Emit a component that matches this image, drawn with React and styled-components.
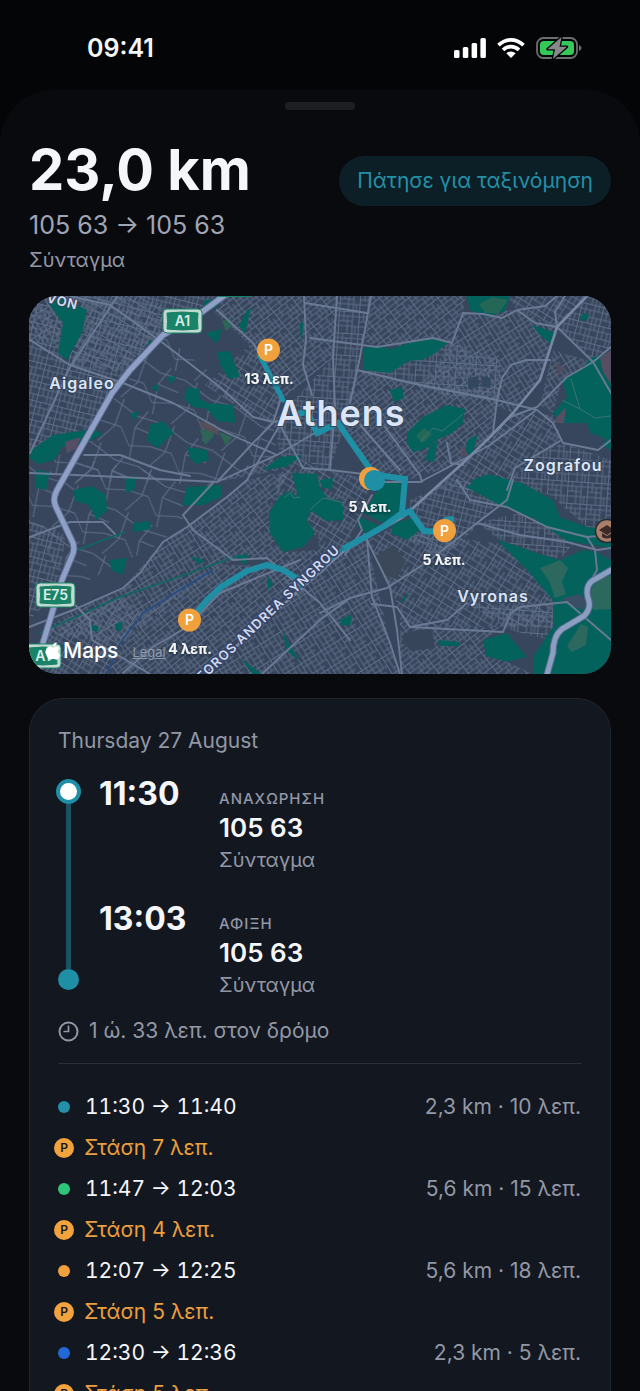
import React from "react";
import styled, { createGlobalStyle } from "styled-components";
import { FaApple } from "react-icons/fa";

const GlobalStyle = createGlobalStyle`
  * { box-sizing: border-box; }
  body { margin: 0; background: #040506; }
`;

const ui = `Inter, "Noto Sans", "Liberation Sans", sans-serif`;

const Screen = styled.div`
  display: flex;
  flex-direction: column;
  height: 100vh;
  overflow: hidden;
  background: #040506;
  color: #f5f6fa;
  font-family: ${ui};
`;

const StatusBar = styled.header`
  display: flex;
  flex: none;
  align-items: center;
  justify-content: space-between;
  height: 90px;
  padding: 5px 58px 0 87px;
`;

const Clock = styled.time`
  font-size: 25px;
  font-weight: 600;
  line-height: 32px;
`;

const StatusIcons = styled.div`
  display: flex;
  align-items: center;
  gap: 11px;
  svg { display: block; }
`;

const Sheet = styled.main`
  flex: 1;
  min-height: 0;
  overflow-y: auto;
  scrollbar-width: none;
  padding: 12px 29px 40px;
  border-radius: 54px 54px 0 0;
  background: #090a0e;
`;

const Handle = styled.div`
  width: 70px;
  height: 8px;
  margin: 0 auto;
  border-radius: 4px;
  background: #1d1e22;
`;

const SheetHeader = styled.div`
  display: flex;
  align-items: flex-start;
  justify-content: space-between;
  padding: 30px 0 23px;
`;

const Distance = styled.h1`
  margin: 0;
  font-size: 56px;
  font-weight: 700;
  line-height: 60px;
`;

const RouteCodes = styled.p`
  margin: 8px 0 0;
  color: #a0a5b5;
  font-size: 25px;
  line-height: 34px;
`;

const Area = styled.p`
  margin: 5px 0 0;
  color: #9397a6;
  font-size: 20px;
  line-height: 26px;
`;

const SortButton = styled.button`
  height: 50px;
  margin-top: 16px;
  padding: 0 18px;
  border: 0;
  border-radius: 25px;
  background: #0c1e26;
  color: #2490a8;
  font: 400 21px/28px ${ui};
  white-space: nowrap;
`;

const MapFrame = styled.section`
  position: relative;
  overflow: hidden;
  border-radius: 28px;
  background: #37465d;
`;

const MapArt = styled.svg`
  display: block;
  width: 100%;
  height: auto;
  font-family: ${ui};
`;

const Attribution = styled.div`
  position: absolute;
  left: 14px;
  bottom: 8px;
  display: flex;
  align-items: center;
  color: #fff;
`;

const MapBrand = styled.span`
  display: flex;
  align-items: center;
  font-size: 21px;
  font-weight: 500;
  line-height: 30px;
`;

const LegalLink = styled.a`
  margin-left: 14px;
  padding-top: 2px;
  color: #8d98ab;
  font-size: 13px;
  line-height: 18px;
`;

const Card = styled.section`
  margin-top: 24px;
  padding: 29px 28px 28px;
  border: 1px solid #20252e;
  border-radius: 34px;
  background: #131720;
`;

const CardDate = styled.h2`
  margin: 0 0 21px;
  color: #9297a5;
  font-size: 21px;
  font-weight: 400;
  line-height: 26px;
`;

const Timeline = styled.div`
  display: grid;
  grid-template-columns: 20px 1fr;
  column-gap: 21px;
`;

const Rail = styled.div`
  display: flex;
  flex-direction: column;
  align-items: center;
  padding: 4px 0 10px;
`;

const RailStart = styled.span`
  flex: none;
  width: 25px;
  height: 25px;
  border: 4px solid #1f8fa6;
  border-radius: 50%;
  background: #fff;
`;

const RailLine = styled.span`
  flex: 1;
  width: 5px;
  background: #1b5364;
`;

const RailEnd = styled.span`
  flex: none;
  width: 21px;
  height: 21px;
  border-radius: 50%;
  background: #1f8fa6;
`;

const Stops = styled.div`
  display: grid;
  row-gap: 25px;
`;

const Stop = styled.div`
  display: grid;
  grid-template-columns: 120px 1fr;
`;

const StopTime = styled.time`
  font-size: 32px;
  font-weight: 700;
  line-height: 38px;
`;

const StopDetails = styled.div`
  padding-top: 14px;
`;

const StopLabel = styled.div`
  color: #9297a5;
  font-size: 15px;
  font-weight: 500;
  line-height: 20px;
  letter-spacing: 1px;
`;

const StopCode = styled.div`
  margin-top: 2px;
  font-size: 26px;
  font-weight: 600;
  line-height: 34px;
`;

const StopArea = styled.div`
  color: #9297a5;
  font-size: 20px;
  line-height: 30px;
`;

const Duration = styled.div`
  display: flex;
  align-items: center;
  gap: 10px;
  margin-top: 17px;
  padding-bottom: 18px;
  border-bottom: 1px solid #2a2f38;
  color: #9297a5;
  font-size: 21px;
  line-height: 28px;
`;

const Legs = styled.ul`
  margin: 22px 0 0;
  padding: 0;
  list-style: none;
`;

const Row = styled.li`
  display: flex;
  align-items: center;
  height: 41px;
  color: ${(p) => (p.$pause ? "#eb9f3e" : "#f5f6fa")};
  font-size: 21px;
  line-height: 28px;
`;

const Marker = styled.span`
  display: flex;
  flex: none;
  justify-content: center;
  width: 12px;
  margin-right: ${(p) => (p.$pause ? "14px" : "15px")};
`;

const Dot = styled.span`
  width: 12px;
  height: 12px;
  border-radius: 50%;
  background: ${(p) => p.$color};
`;

const ParkingBadge = styled.span`
  flex: none;
  width: 20px;
  height: 20px;
  border-radius: 50%;
  background: #f2a33e;
  color: #131720;
  font-size: 12px;
  font-weight: 600;
  line-height: 20px;
  text-align: center;
`;

const LegTime = styled.span`
  font-variant-numeric: tabular-nums;
`;

const LegMeta = styled.span`
  margin-left: auto;
  padding-right: 1px;
  color: #9297a5;
`;

/* Street grids: each district repeats one tile at its own angle. */
const grids = [
  { id: "g0", angle: 14, w: 22, h: 19, d: "M0 .5H22M0 6H22M0 13H22M.5 0V19M5 0V13M10 6V19M14 0V19M18 0V6M18 13V19" },
  { id: "g1", angle: -38, w: 23, h: 18, d: "M0 .5H23M0 5H15M0 9H23M0 14H23M.5 0V18M6 0V9M11 9V18M15 0V14M19 5V18" },
  { id: "g2", angle: 32, w: 21, h: 23, d: "M0 .5H21M0 6H21M0 11H12M0 17H21M.5 0V23M4 6V17M8 0V11M12 0V23M17 11V23" },
  { id: "g3", angle: 4, w: 20, h: 22, d: "M0 .5H20M0 5H20M0 10H14M0 15H20M.5 0V22M5 0V10M9 5V22M14 0V22M17 15V22" },
  { id: "g4", angle: 58, w: 19, h: 24, d: "M0 .5H19M0 5H10M0 9H19M0 15H19M0 20H19M.5 0V24M5 9V24M10 0V15M15 5V20" },
  { id: "sparse", angle: 28, w: 57, h: 49, d: "M0 4L32 9L57 4M0 30L22 26L38 39L57 30M12 0L16 28L8 49M39 0L35 20L44 49M35 20L57 18" },
];

const districts = [
  ["g0", "29,296 216,296 163,335 112,393 87,430 29,450"],
  ["g4", "29,296 80,296 70,350 29,340"],
  ["g2", "70,296 145,296 180,315 120,372 72,365"],
  ["g1", "225,296 338,296 334,357 282,400 250,345 215,312"],
  ["g2", "205,385 250,345 282,400 273,422 250,416"],
  ["g3", "337,296 371,296 352,403 330,470 280,452 273,422 334,357"],
  ["g1", "371,296 466,296 463,313 452,343 377,347 363,340"],
  ["g4", "452,343 463,313 517,310 557,327 540,380 513,413 480,398 420,385"],
  ["g2", "508,296 587,296 557,327 517,310"],
  ["g0", "587,296 611,296 611,347 593,362 557,327"],
  ["g3", "360,373 452,343 500,360 500,400 447,396 415,385"],
  ["g1", "357,370 497,400 493,433 463,463 407,480 372,470 340,425"],
  ["g2", "463,463 513,413 553,415 563,443 533,457 505,490 433,490"],
  ["g4", "540,405 553,350 593,362 562,380 553,413"],
  ["g3", "533,457 563,443 611,460 611,530 587,527 550,495 507,485"],
  ["g2", "217,482 280,452 330,470 372,480 360,515 345,550 320,560 318,535 270,533 280,470"],
  ["g1", "187,527 247,480 290,470 270,510 285,552 320,550 300,600 267,560 233,560"],
  ["g4", "163,542 187,527 233,560 213,572 120,643 40,633 73,610 123,588"],
  ["g0", "29,520 65,535 60,590 29,620"],
  ["g2", "40,633 120,597 143,613 107,674 40,674"],
  ["g1", "107,674 143,613 220,565 267,565 300,580 208,674"],
  ["g4", "208,674 345,545 367,540 390,643 400,674"],
  ["g2", "367,540 410,520 430,535 510,545 553,600 553,627 503,627 410,627 390,590"],
  ["g1", "400,607 410,627 503,627 483,640 507,662 533,674 400,674"],
  ["g3", "467,603 520,607 560,605 550,640 510,630"],
  ["g0", "410,500 457,480 510,490 470,533 440,560 410,540"],
  ["g3", "477,523 520,513 580,535 560,560 500,540"],
  ["sparse", "90,430 163,335 273,422 277,455 217,482 60,482"],
  ["sparse", "29,450 217,482 213,483 163,542 70,590 29,520"],
];

const parks = [
  "48,303 62,298 87,310 82,333 67,360 58,353 63,323",
  "217,352 230,351 240,377 229,379 220,365",
  "187,387 200,389 199,397 207,403 233,405 236,423 217,421 207,409 193,407 184,399",
  "150,425 163,421 174,433 165,441 158,448 147,441",
  "29,452 53,435 93,429 103,434 86,443 62,447 54,460 39,464 29,458",
  "247,310 251,308 245,334 239,326",
  "187,447 207,450 209,460 196,464 190,458",
  "364,348 378,346 392,349 408,343 410,360 390,373 363,370",
  "408,343 433,338 449,342 434,354 422,360 408,361",
  "407,433 423,417 447,405 465,409 463,423 452,433 437,440 425,449 413,452 407,443",
  "467,296 510,296 505,311 487,317 470,310",
  "532,325 554,332 552,345 540,335",
  "562,380 583,367 590,358 611,353 611,450 593,440 587,423 560,423 553,413 567,397",
  "390,390 402,387 404,398 394,402",
  "292,473 317,474 320,488 327,497 310,512 307,520 315,533 303,547 283,552 270,533 269,513 280,496 289,491 298,497",
  "310,510 323,498 338,500 343,506 343,520 326,521",
  "263,470 280,457 303,455 286,467",
  "380,483 407,483 402,513 383,523 363,513 372,500",
  "360,517 371,522 382,527 367,534 358,527",
  "393,523 413,518 420,530 407,540 391,533",
  "466,487 477,480 520,482 553,500 560,517 587,527 611,530 611,548 567,541 535,519 500,505",
  "470,481 488,474 514,481 508,490",
  "497,540 520,547 533,552 560,560 583,550 597,552 611,560 611,674 533,674 533,657 553,627 553,600 527,570",
  "483,640 507,633 527,657 507,662 486,656",
  "73,490 92,486 106,495 107,510 97,520 89,505 75,501",
  "187,487 222,485 222,497 203,505 182,505",
  "110,560 127,558 123,575 111,570",
  "133,523 150,521 151,529 134,532",
  "205,300 224,299 213,310 202,309",
  "206,333 222,329 217,344",
  "430,446 438,440 434,462 425,460",
  "468,440 478,434 472,456 464,452",
  "438,640 459,642 460,646 440,646",
  "240,658 262,674 253,674",
  "236,557 248,553 246,566",
  "267,575 273,584 268,590",
  "340,620 352,614 350,626 341,625",
  "36,470 50,472 46,490 36,488",
  "125,478 137,476 134,491 126,492",
  "299,324 303,322 302,345",
  "162,339 150,341 145,347",
  "190,556 204,560 200,565",
  "400,603 408,591 405,600",
  "583,313 590,315 585,322 580,318",
  "115,624 123,622 121,631 115,630",
  "90,624 99,627 97,632 90,630",
  "151,387 159,384 157,392",
  "167,377 177,376 171,384",
  "130,414 140,411 135,420",
  "320,480 333,478 332,489 322,488",
  "282,630 290,645 300,661 287,651",
];

const tinted = [
  ["#2d6556", "200,430 215,428 213,437 205,445"],
  ["#2d6556", "219,432 232,437 226,446"],
  ["#2d6556", "222,321 231,318 232,326 226,331"],
  ["#256757", "479,304 492,297 508,300 499,313 485,313"],
  ["#256757", "416,436 424,428 432,434 423,443"],
  ["#2c685e", "540,568 560,560 568,568 562,582 566,594 555,598 549,581"],
  ["#2c685e", "567,646 581,624 588,627 586,645 572,652"],
  ["#2c685e", "585,600 595,582 611,575 611,609 594,610"],
  ["#3a4f65", "563,598 580,594 588,602 583,610 565,603"],
  ["#564d66", "65,442 81,437 76,449 67,453"],
  ["#574f61", "556,418 566,407 564,423 555,423"],
  ["#574f61", "600,358 611,350 611,384 603,372"],
  ["#524c60", "556,363 565,368 558,375"],
  ["#524c60", "463,444 468,454 461,459"],
  ["#544f59", "199,421 215,424 219,435 203,429"],
  ["#37455b", "404,633 432,628 435,648 411,651 402,642"],
  ["#3b4859", "375,557 393,545 406,561 397,579 383,575"],
  ["#344760", "468,378 478,376 479,387 468,389"],
  ["#344760", "481,376 491,378 490,388 482,387"],
  ["#344760", "593,433 606,439 602,446 590,442"],
];

const arterials = [
  "M70 296L110 305L163 343L220 387L253 417L273 422L300 418",
  "M117 297L70 367L30 453",
  "M30 340L70 365L123 383L173 403L227 433L277 455",
  "M30 473L120 477L217 482L253 443L273 423L282 395",
  "M217 310L253 343L282 395",
  "M304 296L306 340L303 365L312 395",
  "M217 482L277 455L320 430",
  "M280 425L303 468L330 470L372 475",
  "M371 296L360 357L350 403",
  "M337 296L333 357L335 407L330 470",
  "M305 303L367 313",
  "M310 338L377 347L433 338L452 343L463 313L483 314L502 318L517 310L545 306L557 296",
  "M357 370L420 385L497 400L537 410L553 423L563 443L598 450L611 440",
  "M517 310L535 323L557 327L555 312L565 296",
  "M557 327L593 362L611 393",
  "M611 347L593 362L567 377L537 407L510 417L490 437",
  "M493 433L497 400L502 378L511 365L526 360L550 360",
  "M372 482L420 482L447 468L490 445L535 411",
  "M507 490L515 468L533 457L560 441",
  "M447 443L451 463L463 465",
  "M385 427L420 475L422 482",
  "M360 425L400 470",
  "M30 537L70 522L103 522L115 534",
  "M29 627L73 610L123 588L140 573L163 542L187 527L227 497L247 480L280 425",
  "M213 483L183 515L193 530L233 560L267 558L320 603L350 640",
  "M123 673L153 647L187 627L220 593L300 560",
  "M320 613L350 598L387 588L430 560L477 523L507 500L513 480",
  "M367 540L372 597L390 643L400 674",
  "M364 534L390 587L397 630L402 674",
  "M372 604L397 607L410 627L447 620L467 603",
  "M410 627L503 632L511 613L520 607L567 602L611 640",
  "M477 523L520 535L567 542L597 550L611 548",
  "M457 480L470 500L507 507L547 527L587 537L611 535",
  "M587 537L595 550L597 570L590 582",
  "M345 555L362 530L358 520L372 495",
  "M262 674L320 620L350 598",
  "M70 600L90 620L92 640L150 674",
  "M84 455L120 455L160 470L190 476",
];

const boulevards = [
  "M587 296L557 327L540 380L513 413L490 437L463 463L433 490L403 517L345 550",
  "M205 674L345 550",
];

const Street = ({ d, width, color }) => (
  <path d={d} fill="none" stroke={color} strokeWidth={width} strokeLinejoin="round" strokeLinecap="round" />
);

const RoadShield = ({ x, y, w, label }) => (
  <g>
    <rect x={x} y={y} width={w} height="24" rx="4" fill="#c3d8d0" stroke="#178268" />
    <path d={`M${x + 4} ${y + 4}Q${x + w / 2} ${y + 2} ${x + w - 4} ${y + 4}Q${x + w - 5} ${y + 12} ${x + w - 4} ${y + 20}Q${x + w / 2} ${y + 22} ${x + 4} ${y + 20}Q${x + 5} ${y + 12} ${x + 4} ${y + 4}Z`} fill="#198368" stroke="#198368" strokeLinejoin="round" />
    <text x={x + w / 2} y={y + 17} textAnchor="middle" fontSize="14" fontWeight="600" fill="#dcebe8">{label}</text>
  </g>
);

const PlaceName = ({ x, y, size, children }) => (
  <text x={x} y={y} textAnchor="middle" fontSize={size} fontWeight="600" letterSpacing="1" fill="#dbe5f5" stroke="#37465d" strokeWidth="2" paintOrder="stroke">
    {children}
  </text>
);

const ParkingPin = ({ x, y }) => (
  <g>
    <circle cx={x} cy={y} r="11.5" fill="#f0a03c" />
    <text x={x} y={y + 5} textAnchor="middle" fontSize="14" fontWeight="600" fill="#fff">P</text>
  </g>
);

const PauseLabel = ({ x, y, children }) => (
  <text x={x} y={y} textAnchor="middle" fontSize="14" fontWeight="700" fill="#f4f6fa" filter="url(#labelShadow)">
    {children}
  </text>
);

const RouteMap = () => (
  <MapArt viewBox="29 296 582 378" role="img" aria-label="Athens">
    <defs>
      {grids.map((g) => (
        <pattern key={g.id} id={g.id} width={g.w} height={g.h} patternUnits="userSpaceOnUse" patternTransform={`rotate(${g.angle})`}>
          <path d={g.d} fill="none" stroke="#61708a" strokeWidth={g.id === "sparse" ? 1 : 0.9} />
        </pattern>
      ))}
      <filter id="labelShadow" x="-20%" y="-40%" width="140%" height="180%">
        <feDropShadow dx="0" dy="1" stdDeviation="1.5" floodColor="#101620" floodOpacity="0.9" />
      </filter>
    </defs>
    <rect x="29" y="296" width="582" height="378" fill="#37465d" />
    {districts.map(([id, points], i) => (
      <polygon key={i} points={points} fill={`url(#${id})`} />
    ))}
    {parks.map((points) => (
      <polygon key={points} points={points} fill="#04625c" />
    ))}
    {tinted.map(([fill, points]) => (
      <polygon key={points} points={points} fill={fill} />
    ))}
    <Street d="M421 441L433 428L442 431L455 421L463 414M562 400L580 409L595 418L611 416M571 379L580 409M285 497L290 493L294 498L300 497M310 510L323 498L345 503" width={1} color="#3c7275" />
    <Street d="M40 633L120 597L190 573L240 555M75 551L125 532" width={1.5} color="#0c6862" />
    <Street d="M107 674L120 643L143 613L180 590L213 570" width={1.5} color="#244d88" />
    {arterials.map((d) => (
      <Street key={d} d={d} width={1.9} color="#6b7a94" />
    ))}
    {boulevards.map((d) => (
      <Street key={d} d={d} width={2.6} color="#7887a3" />
    ))}
    <Street d="M225 295L202 312L163 335L130 370L112 393L87 437L57 490Q52 499 56 507L73 543Q75 550 72 556L62 580L43 643L38 674" width={7} color="#606f94" />
    <Street d="M225 295L202 312L163 335L130 370L112 393L87 437L57 490Q52 499 56 507L73 543Q75 550 72 556L62 580L43 643L38 674" width={5} color="#8f9fc5" />
    <Street d="M613 569L592 581Q585 587 588 598Q592 608 584 616L562 629Q553 636 553 653L546 678" width={7} color="#566a8e" />
    <Street d="M613 569L592 581Q585 587 588 598Q592 608 584 616L562 629Q553 636 553 653L546 678" width={5} color="#8ba0c1" />
    <rect x="218" y="290" width="34" height="7" fill="#178268" />

    <Street d="M260 356L283 400" width={5} color="#1f8fa5" />
    <g fill="none" stroke="#1f8fa5" strokeWidth="6" strokeLinejoin="miter">
      <path d="M297 414L307 412L317 433L338 423L372 472L384 476L405 479L402 513L386 525L367 536L343 549" />
      <path d="M400 516L410 511L424 531L444 532L446 520L454 519" />
      <path d="M298 579L283 570L267 565L247 571L221 587L207 600L192 618" />
    </g>
    <Street d="M298 589L343 549" width={3} color="#1f7f98" />

    <RoadShield x={163} y={309} w={39} label="A1" />
    <RoadShield x={36} y={583} w={39} label="E75" />
    <RoadShield x={25} y={644} w={36} label="A1" />

    <text x="46" y="302" transform="rotate(14 46 302)" fontSize="13" fontWeight="600" letterSpacing="1" fill="#d5dff0" stroke="#37465d" strokeWidth="2" paintOrder="stroke">VON</text>
    <text x="202" y="682" transform="rotate(-43.4 202 682)" fontSize="13" fontWeight="600" letterSpacing="1" fill="#d0dbef" stroke="#38456a" strokeWidth="3" paintOrder="stroke">FOROS ANDREA SYNGROU</text>
    <PlaceName x={82} y={389} size={16}>Aigaleo</PlaceName>
    <PlaceName x={341} y={426} size={36}>Athens</PlaceName>
    <PlaceName x={563} y={471} size={16}>Zografou</PlaceName>
    <PlaceName x={493} y={602} size={16}>Vyronas</PlaceName>

    <ParkingPin x={268.5} y={350} />
    <circle cx="370.500" cy="478.500" r="11.5" fill="#f0a03c" />
    <circle cx="374.500" cy="480.500" r="10.500" fill="#1f8fa5" />
    <ParkingPin x={444.5} y={530.5} />
    <ParkingPin x={189.5} y={620} />
    <PauseLabel x={269} y={384}>13 λεπ.</PauseLabel>
    <PauseLabel x={370} y={512}>5 λεπ.</PauseLabel>
    <PauseLabel x={444} y={565}>5 λεπ.</PauseLabel>
    <PauseLabel x={190} y={654}>4 λεπ.</PauseLabel>

    <circle cx="607" cy="531" r="11.500" fill="#a97f68" stroke="#292a30" strokeWidth="1.500" />
    <path d="M599 530L607 525L614 530L607 535ZM602 533V537Q607 540 612 537V533L607 536Z" fill="#3b2a27" />
  </MapArt>
);

const SignalIcon = () => (
  <svg width="32" height="20" viewBox="0 0 32 20" fill="#fff" aria-hidden="true">
    <rect x="0" y="12" width="5.500" height="8" rx="1.500" />
    <rect x="8.800" y="9" width="5.500" height="11" rx="1.500" />
    <rect x="17.600" y="5" width="5.500" height="15" rx="1.500" />
    <rect x="26.400" y="0" width="5.500" height="20" rx="1.500" />
  </svg>
);

const WifiIcon = () => (
  <svg width="28" height="20" viewBox="0 0 28 20" aria-hidden="true">
    <g fill="none" stroke="#fff" strokeWidth="3.800">
      <path d="M1.500 7.200Q7.200 1.900 14 1.900T26.500 7.200" />
      <path d="M6 11.800Q9.600 8.600 14 8.600T22 11.800" />
    </g>
    <path d="M9.300 15.200Q14 11.700 18.700 15.200L14 20Z" fill="#fff" />
  </svg>
);

const BatteryIcon = () => (
  <svg width="46" height="24" viewBox="0 0 46 24" aria-hidden="true">
    <rect x="1" y="2" width="40" height="20" rx="6.500" fill="none" stroke="#6d6e70" strokeWidth="1.800" />
    <rect x="4" y="5" width="34" height="14" rx="4" fill="#34c759" />
    <path d="M43 9Q45.500 10 45.500 12T43 15Z" fill="#6d6e70" />
    <path d="M25.500 1L11.500 13.200H19L17 23L31 10.800H23.500Z" fill="#87898b" stroke="#040506" strokeWidth="2.600" strokeLinejoin="round" paintOrder="stroke" />
  </svg>
);

const ClockIcon = () => (
  <svg width="21" height="21" viewBox="0 0 21 21" fill="none" stroke="#9297a5" strokeWidth="2" strokeLinecap="round" aria-hidden="true">
    <circle cx="10.500" cy="10.500" r="9" />
    <path d="M10.500 5.200V10.500H6.200" strokeWidth="1.700" strokeLinejoin="round" />
  </svg>
);

const stops = [
  { time: "11:30", label: "ΑΝΑΧΩΡΗΣΗ" },
  { time: "13:03", label: "ΑΦΙΞΗ" },
];

const rows = [
  { time: "11:30 → 11:40", meta: "2,3 km · 10 λεπ.", color: "#2190a8" },
  { pause: "Στάση 7 λεπ." },
  { time: "11:47 → 12:03", meta: "5,6 km · 15 λεπ.", color: "#2fc578" },
  { pause: "Στάση 4 λεπ." },
  { time: "12:07 → 12:25", meta: "5,6 km · 18 λεπ.", color: "#f2a03e" },
  { pause: "Στάση 5 λεπ." },
  { time: "12:30 → 12:36", meta: "2,3 km · 5 λεπ.", color: "#2468d6" },
  { pause: "Στάση 5 λεπ." },
];

export default function App() {
  return (
    <Screen lang="el">
      <GlobalStyle />
      <StatusBar>
        <Clock>09:41</Clock>
        <StatusIcons>
          <SignalIcon />
          <WifiIcon />
          <BatteryIcon />
        </StatusIcons>
      </StatusBar>
      <Sheet>
        <Handle />
        <SheetHeader>
          <div>
            <Distance>23,0 km</Distance>
            <RouteCodes>105 63 → 105 63</RouteCodes>
            <Area>Σύνταγμα</Area>
          </div>
          <SortButton type="button">Πάτησε για ταξινόμηση</SortButton>
        </SheetHeader>
        <MapFrame>
          <RouteMap />
          <Attribution>
            <MapBrand>
              <FaApple size={20} aria-hidden="true" />
              Maps
            </MapBrand>
            <LegalLink href="#legal">Legal</LegalLink>
          </Attribution>
        </MapFrame>
        <Card>
          <CardDate>Thursday 27 August</CardDate>
          <Timeline>
            <Rail>
              <RailStart />
              <RailLine />
              <RailEnd />
            </Rail>
            <Stops>
              {stops.map((s) => (
                <Stop key={s.time}>
                  <StopTime>{s.time}</StopTime>
                  <StopDetails>
                    <StopLabel>{s.label}</StopLabel>
                    <StopCode>105 63</StopCode>
                    <StopArea>Σύνταγμα</StopArea>
                  </StopDetails>
                </Stop>
              ))}
            </Stops>
          </Timeline>
          <Duration>
            <ClockIcon />
            1 ώ. 33 λεπ. στον δρόμο
          </Duration>
          <Legs>
            {rows.map((r, i) =>
              r.pause ? (
                <Row key={i} $pause>
                  <Marker $pause>
                    <ParkingBadge>P</ParkingBadge>
                  </Marker>
                  {r.pause}
                </Row>
              ) : (
                <Row key={i}>
                  <Marker>
                    <Dot $color={r.color} />
                  </Marker>
                  <LegTime>{r.time}</LegTime>
                  <LegMeta>{r.meta}</LegMeta>
                </Row>
              )
            )}
          </Legs>
        </Card>
      </Sheet>
    </Screen>
  );
}
